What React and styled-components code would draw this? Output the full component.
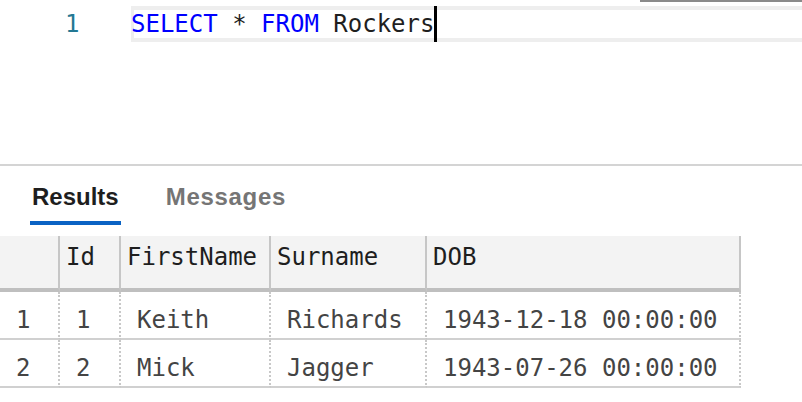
import styled, { createGlobalStyle } from 'styled-components'

const GlobalStyle = createGlobalStyle`
  html, body {
    margin: 0;
    padding: 0;
    background: #ffffff;
  }

  * {
    box-sizing: border-box;
  }
`

const columns = [60, 61, 150, 156, 314]

const headers = ['', 'Id', 'FirstName', 'Surname', 'DOB']

const rows = [
  ['1', '1', 'Keith', 'Richards', '1943-12-18 00:00:00'],
  ['2', '2', 'Mick', 'Jagger', '1943-07-26 00:00:00'],
]

export default function App() {
  return (
    <Page>
      <GlobalStyle />

      <Editor>
        <ScrollThumb />
        <CodeLine>
          <Gutter>1</Gutter>
          <Code>
            <Keyword>SELECT</Keyword> * <Keyword>FROM</Keyword> Rockers
            <Caret />
          </Code>
        </CodeLine>
      </Editor>

      <ResultsPane>
        <Tabs>
          <Tab $active>Results</Tab>
          <Tab>Messages</Tab>
        </Tabs>

        <Grid>
          {headers.map((header, index) => (
            <HeaderCell key={index}>{header}</HeaderCell>
          ))}

          {rows.map((row) =>
            row.map((value, index) => (
              <Cell key={`${row[0]}-${index}`}>{value}</Cell>
            )),
          )}
        </Grid>
      </ResultsPane>
    </Page>
  )
}

const Page = styled.div`
  width: 802px;
  height: 402px;
  overflow: hidden;
  background: #ffffff;
  display: flex;
  flex-direction: column;
`

const Editor = styled.div`
  position: relative;
  height: 166px;
  padding-top: 6px;
  border-bottom: 2px solid #d4d4d4;
`

const ScrollThumb = styled.div`
  position: absolute;
  top: 0;
  right: 0;
  width: 162px;
  height: 2px;
  background: #8a8a8a;
`

const CodeLine = styled.div`
  display: flex;
  height: 36px;
  font-family: 'DejaVu Sans Mono', 'Liberation Mono', monospace;
  font-size: 24px;
  line-height: 36px;
`

const Gutter = styled.div`
  width: 131px;
  flex: none;
  padding-left: 65px;
  color: #237893;
`

const Code = styled.div`
  flex: 1;
  display: flex;
  white-space: pre;
  color: #1f1f1f;
  box-shadow:
    inset 3px 0 0 #eeeeee,
    inset 0 4px 0 #eeeeee,
    inset 0 -4px 0 #eeeeee;
`

const Keyword = styled.span`
  color: #0000ff;
`

const Caret = styled.span`
  display: inline-block;
  width: 3px;
  height: 36px;
  background: #000000;
`

const ResultsPane = styled.div`
  display: flex;
  flex-direction: column;
`

const Tabs = styled.div`
  display: flex;
  gap: 43px;
  padding: 17px 0 0 30px;
  height: 70px;
`

const Tab = styled.div`
  height: 42px;
  padding: 0 2px;
  font-family: 'Liberation Sans', Arial, sans-serif;
  font-weight: 700;
  font-size: 24px;
  line-height: 28px;
  color: ${(props) => (props.$active ? '#1e1e1e' : '#757575')};
  border-bottom: 4px solid ${(props) => (props.$active ? '#0a63c4' : 'transparent')};
  letter-spacing: ${(props) => (props.$active ? '0' : '0.7px')};
`

const Grid = styled.div`
  display: grid;
  grid-template-columns: ${columns.map((width) => `${width}px`).join(' ')};
  width: ${columns.reduce((sum, width) => sum + width, 0)}px;
  font-family: 'DejaVu Sans Mono', 'Liberation Mono', monospace;
  font-size: 24px;
  line-height: 28px;
  white-space: pre;
`

const HeaderCell = styled.div`
  height: 56px;
  padding: 7px 0 0 6px;
  background: #f3f3f3;
  color: #1e1e1e;
  border-right: 2px solid #c6c6c6;
  border-bottom: 4px solid #bfbfbf;
`

const Cell = styled.div`
  height: 48px;
  padding: 14px 0 0 16px;
  color: #444444;
  border-right: 2px dotted #c8c8c8;
  border-bottom: 2px solid #d0d0d0;
`
